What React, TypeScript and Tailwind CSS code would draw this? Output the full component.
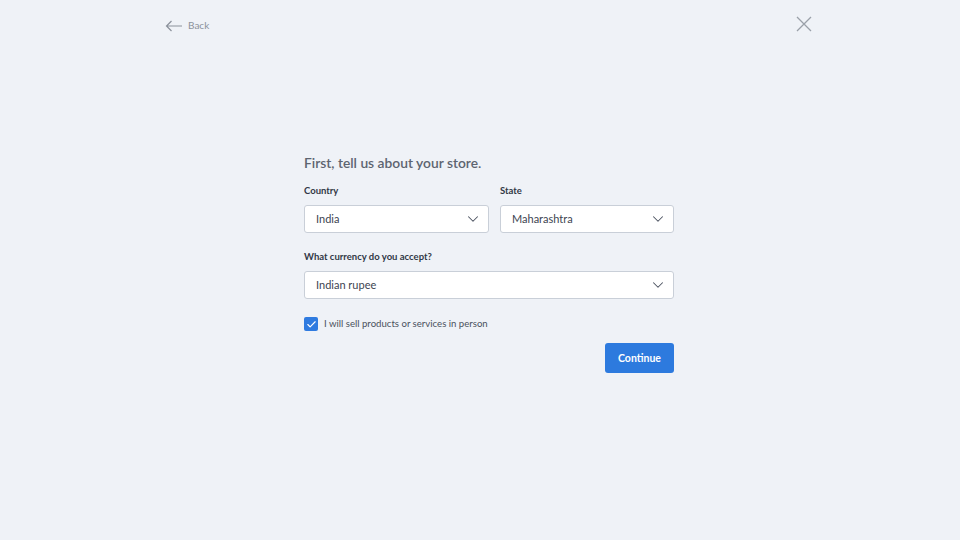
import { ChevronDown, Check } from 'lucide-react';

function Select({ value, className = '' }: { value: string; className?: string }) {
  return (
    <div className={`h-[28px] flex items-center justify-between pl-[11px] pr-[6px] bg-white border border-[#c9cfd8] rounded-[3px] ${className}`}>
      <span className="text-[11px] text-[#3d4451]">{value}</span>
      <ChevronDown size={18} strokeWidth={1.4} className="text-[#4b5260]" />
    </div>
  );
}

export default function App() {
  return (
    <div className="w-[960px] h-[540px] bg-[#eff2f7] overflow-hidden" style={{ fontFamily: 'Lato, "Open Sans", sans-serif' }}>
      <div className="flex items-center justify-between h-[48px] pl-[165px] pr-[148px]">
        <div className="flex items-center gap-[5px] text-[#8b919b] mt-[3px]">
          <svg width="18" height="12" viewBox="0 0 18 12" fill="none" stroke="currentColor" strokeWidth="1.2">
            <path d="M17 6H1.5M6.5 1L1.5 6l5 5" />
          </svg>
          <span className="text-[10px]">Back</span>
        </div>
        <svg width="16" height="16" viewBox="0 0 16 16" fill="none" stroke="#9aa0a9" strokeWidth="1.3">
          <path d="M1 1l14 14M15 1L1 15" />
        </svg>
      </div>

      <div className="ml-[304px] w-[370px] pt-[106px]">
        <h1 className="text-[13.8px] font-semibold text-[#5d6470] leading-[18px]">First, tell us about your store.</h1>

        <div className="flex gap-[11px] mt-[12px]">
          <div className="w-[185px]">
            <div className="text-[9.5px] font-bold text-[#313846] leading-[14px] mb-[7px]">Country</div>
            <Select value="India" />
          </div>
          <div className="flex-1">
            <div className="text-[9.5px] font-bold text-[#313846] leading-[14px] mb-[7px]">State</div>
            <Select value="Maharashtra" />
          </div>
        </div>

        <div className="mt-[17px]">
          <div className="text-[9.5px] font-bold text-[#313846] leading-[14px] mb-[7px]">What currency do you accept?</div>
          <Select value="Indian rupee" />
        </div>

        <label className="flex items-center gap-[6px] mt-[18px]">
          <span className="w-[14px] h-[14px] rounded-[2px] bg-[#2f7be0] flex items-center justify-center">
            <Check size={11} strokeWidth={2.5} className="text-white" />
          </span>
          <span className="text-[9.6px] text-[#4a515d]">I will sell products or services in person</span>
        </label>

        <div className="flex justify-end mt-[12px]">
          <button className="w-[69px] h-[30px] rounded-[3px] bg-[#2d7ade] text-white text-[10.5px] font-bold">Continue</button>
        </div>
      </div>
    </div>
  );
}
